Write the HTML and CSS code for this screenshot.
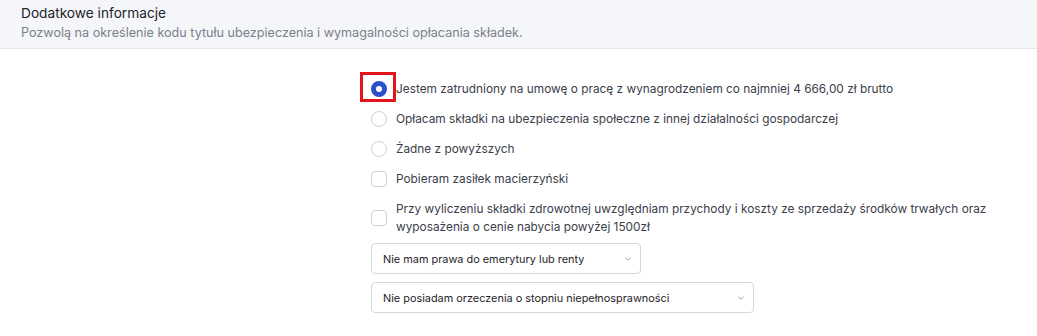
FILE: index.html
```html
<!DOCTYPE html>
<html lang="pl">
<head>
    <meta charset="utf-8">
    <title>Dodatkowe informacje</title>
    <link rel="stylesheet" href="styles.css">
</head>
<body>
    <div class="naglowek">
        <h2>Dodatkowe informacje</h2>
        <p>Pozwolą na określenie kodu tytułu ubezpieczenia i wymagalności opłacania składek.</p>
    </div>
    <div class="formularz">
        <label class="wiersz">
            <span class="radio zaznaczone"></span>
            <span class="ramka"></span>
            Jestem zatrudniony na umowę o pracę z wynagrodzeniem co najmniej 4 666,00 zł brutto
        </label>
        <label class="wiersz">
            <span class="radio"></span>
            Opłacam składki na ubezpieczenia społeczne z innej działalności gospodarczej
        </label>
        <label class="wiersz">
            <span class="radio"></span>
            Żadne z powyższych
        </label>
        <label class="wiersz">
            <span class="checkbox"></span>
            Pobieram zasiłek macierzyński
        </label>
        <label class="wiersz">
            <span class="checkbox"></span>
            <span>Przy wyliczeniu składki zdrowotnej uwzględniam przychody i koszty ze sprzedaży środków trwałych oraz wyposażenia o cenie nabycia powyżej 1500zł</span>
        </label>
        <div class="wybor krotki">
            <span>Nie mam prawa do emerytury lub renty</span>
            <svg width="8" height="6" viewBox="0 0 8 6"><path d="M1.5 1.8 L4 4.2 L6.5 1.8" fill="none" stroke="#9aa0aa" stroke-width="1"/></svg>
        </div>
        <div class="wybor dlugi">
            <span>Nie posiadam orzeczenia o stopniu niepełnosprawności</span>
            <svg width="8" height="6" viewBox="0 0 8 6"><path d="M1.5 1.8 L4 4.2 L6.5 1.8" fill="none" stroke="#9aa0aa" stroke-width="1"/></svg>
        </div>
    </div>
</body>
</html>
```

FILE: styles.css
```css
body {
    margin: 0;
    font-family: Inter, "Noto Sans", sans-serif;
    background: #fff;
    color: #3b404b;
}
.naglowek {
    background: #f4f6f9;
    border-bottom: 1px solid #e3e7ed;
    padding: 4px 21px 0;
    height: 44px;
}
.naglowek h2 {
    margin: 0;
    font-size: 13.7px;
    font-weight: 400;
    color: #1f2329;
    line-height: 18px;
}
.naglowek p {
    margin: 2px 0 0;
    font-size: 12.6px;
    color: #7b818c;
    line-height: 18px;
}
.formularz {
    padding: 25px 0 0 371px;
}
.wiersz {
    position: relative;
    display: flex;
    align-items: center;
    gap: 9px;
    font-size: 11.85px;
    line-height: 18px;
    padding: 6px 0;
    max-width: 625px;
}
.radio {
    flex: none;
    width: 16px;
    height: 16px;
    border: 1px solid #ccd1d8;
    border-radius: 50%;
    box-sizing: border-box;
}
.radio.zaznaczone {
    border: 5px solid #2d4fc9;
    background: #fff;
}
.checkbox {
    flex: none;
    width: 16px;
    height: 16px;
    border: 1px solid #ccd1d8;
    border-radius: 4px;
    box-sizing: border-box;
}
.ramka {
    position: absolute;
    left: -11px;
    top: -2px;
    width: 30px;
    height: 24px;
    border: 3px solid #e3141c;
}
.wybor {
    display: flex;
    align-items: center;
    justify-content: space-between;
    box-sizing: border-box;
    height: 31px;
    border: 1px solid #d3d7de;
    border-radius: 4px;
    padding: 0 8px 0 11px;
    font-size: 10.9px;
    color: #1f2329;
    margin-top: 1px;
}
.krotki {
    width: 270px;
}
.dlugi {
    width: 383px;
    margin-top: 8px;
}
```
